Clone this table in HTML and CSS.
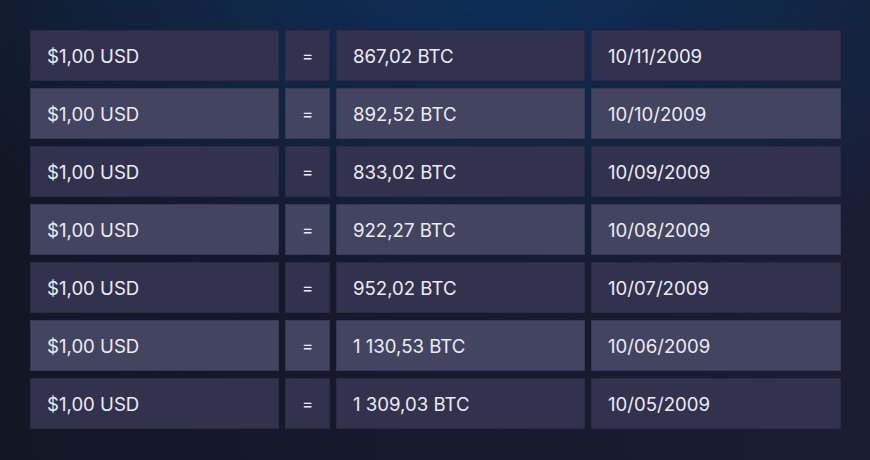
FILE: index.html
```html
<!DOCTYPE html>
<html>
<head>
<meta charset="utf-8">
<link rel="stylesheet" href="styles.css">
</head>
<body>
<div class="page">
  <div class="table">
    <div class="cell dark">$1,00 USD</div><div class="cell dark eq">=</div><div class="cell dark">867,02 BTC</div><div class="cell dark">10/11/2009</div>
    <div class="cell light">$1,00 USD</div><div class="cell light eq">=</div><div class="cell light">892,52 BTC</div><div class="cell light">10/10/2009</div>
    <div class="cell dark">$1,00 USD</div><div class="cell dark eq">=</div><div class="cell dark">833,02 BTC</div><div class="cell dark">10/09/2009</div>
    <div class="cell light">$1,00 USD</div><div class="cell light eq">=</div><div class="cell light">922,27 BTC</div><div class="cell light">10/08/2009</div>
    <div class="cell dark">$1,00 USD</div><div class="cell dark eq">=</div><div class="cell dark">952,02 BTC</div><div class="cell dark">10/07/2009</div>
    <div class="cell light">$1,00 USD</div><div class="cell light eq">=</div><div class="cell light">1 130,53 BTC</div><div class="cell light">10/06/2009</div>
    <div class="cell dark">$1,00 USD</div><div class="cell dark eq">=</div><div class="cell dark">1 309,03 BTC</div><div class="cell dark">10/05/2009</div>
  </div>
</div>
</body>
</html>
```
FILE: styles.css
```css
html, body {
  margin: 0;
  padding: 0;
}
body {
  width: 870px;
  height: 460px;
  overflow: hidden;
  font-family: Inter, "Noto Sans", sans-serif;
  background:
    radial-gradient(ellipse 620px 330px at 500px -40px, #0d2f5c 0%, #0f2849 38%, rgba(20,28,50,0) 100%),
    linear-gradient(90deg, #121726 0%, #161a2c 50%, #1b1d33 100%);
}
.page {
  padding: 30px 29px 0 30px;
}
.table {
  display: grid;
  grid-template-columns: 249px 45px 249px 250px;
  grid-auto-rows: 51px;
  column-gap: 6px;
  row-gap: 7px;
}
.cell {
  display: flex;
  align-items: center;
  padding-left: 17px;
  color: #ececf3;
  font-size: 18.6px;
  box-shadow: inset 0 0 0 1px rgba(20, 20, 40, 0.25);
}
.dark {
  background: #32324e;
}
.light {
  background: #43445f;
}
.eq {
  padding-left: 0;
  justify-content: center;
  font-size: 17px;
}
```
